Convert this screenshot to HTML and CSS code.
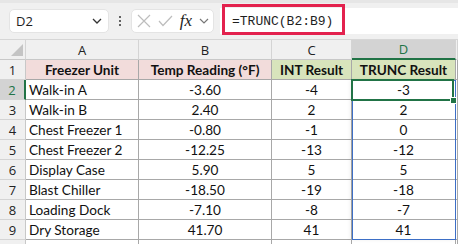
FILE: index.html
```html
<!DOCTYPE html>
<html>
<head>
<meta charset="utf-8">
<link rel="stylesheet" href="styles.css">
</head>
<body>
<div class="app">
  <div class="toolbar">
    <div class="namebox">
      <span class="name">D2</span>
      <svg class="chev" width="10" height="6" viewBox="0 0 10 6"><polyline points="1,1 5,5 9,1" fill="none" stroke="#333" stroke-width="1.3"/></svg>
    </div>
    <div class="dots"><i></i><i></i><i></i></div>
    <div class="fxbox">
      <svg width="14" height="14" viewBox="0 0 14 14"><path d="M1 1 L13 13 M13 1 L1 13" stroke="#bdbdbd" stroke-width="1.2" fill="none"/></svg>
      <svg width="15" height="12" viewBox="0 0 15 12"><polyline points="1,6 5,10.5 14,1" stroke="#bdbdbd" stroke-width="1.2" fill="none"/></svg>
      <span class="fx">fx</span>
      <svg width="10" height="6" viewBox="0 0 10 6"><polyline points="1,1 5,5 9,1" fill="none" stroke="#777" stroke-width="1.2"/></svg>
    </div>
    <div class="formula">
      <span class="ftext">=TRUNC(B2:B9)</span>
      <div class="hl"></div>
    </div>
  </div>
  <div class="sheet">
    <div class="c hd corner"><span class="tri"></span></div>
    <div class="c hd">A</div>
    <div class="c hd">B</div>
    <div class="c hd">C</div>
    <div class="c hd sel">D</div>
    <div class="c hd"></div>

    <div class="c rh">1</div>
    <div class="c th pink">Freezer Unit</div>
    <div class="c th pink">Temp Reading (°F)</div>
    <div class="c th green">INT Result</div>
    <div class="c th green">TRUNC Result</div>
    <div class="c"></div>

    <div class="c rh rsel">2</div>
    <div class="c l">Walk-in A</div>
    <div class="c m">-3.60</div>
    <div class="c m">-4</div>
    <div class="c m">-3</div>
    <div class="c"></div>

    <div class="c rh">3</div>
    <div class="c l">Walk-in B</div>
    <div class="c m">2.40</div>
    <div class="c m">2</div>
    <div class="c m">2</div>
    <div class="c"></div>

    <div class="c rh">4</div>
    <div class="c l">Chest Freezer 1</div>
    <div class="c m">-0.80</div>
    <div class="c m">-1</div>
    <div class="c m">0</div>
    <div class="c"></div>

    <div class="c rh">5</div>
    <div class="c l">Chest Freezer 2</div>
    <div class="c m">-12.25</div>
    <div class="c m">-13</div>
    <div class="c m">-12</div>
    <div class="c"></div>

    <div class="c rh">6</div>
    <div class="c l">Display Case</div>
    <div class="c m">5.90</div>
    <div class="c m">5</div>
    <div class="c m">5</div>
    <div class="c"></div>

    <div class="c rh">7</div>
    <div class="c l">Blast Chiller</div>
    <div class="c m">-18.50</div>
    <div class="c m">-19</div>
    <div class="c m">-18</div>
    <div class="c"></div>

    <div class="c rh">8</div>
    <div class="c l">Loading Dock</div>
    <div class="c m">-7.10</div>
    <div class="c m">-8</div>
    <div class="c m">-7</div>
    <div class="c"></div>

    <div class="c rh">9</div>
    <div class="c l">Dry Storage</div>
    <div class="c m">41.70</div>
    <div class="c m">41</div>
    <div class="c m">41</div>
    <div class="c"></div>

    <div class="c rh"></div>
    <div class="c"></div>
    <div class="c"></div>
    <div class="c"></div>
    <div class="c"></div>
    <div class="c"></div>

    <div class="range"></div>
    <div class="active"><span class="handle"></span></div>
  </div>
</div>
</body>
</html>
```
FILE: styles.css
```css
* { box-sizing: border-box; margin: 0; padding: 0; }
html, body { width: 458px; height: 244px; overflow: hidden; background: #fff; }
body { font-family: "Lato", "Liberation Sans", sans-serif; color: #111; }

.app { width: 458px; height: 244px; overflow: hidden; }

.toolbar {
  height: 40px;
  background: #f0f0f0;
  border-top: 3px solid #e6e6e6;
  border-bottom: 1px solid #d6d6d6;
  display: flex;
  align-items: flex-start;
  padding: 6px 0 0 9px;
  position: relative;
}
.namebox {
  width: 100px; height: 24px;
  background: #fff;
  border-radius: 5px;
  border: 1px solid #e4e4e4;
  display: flex; align-items: center; justify-content: space-between;
  padding: 0 6px 0 6px;
  font-family: "Open Sans", "Noto Sans", sans-serif;
  font-size: 13px; color: #1e1e1e;
}
.dots {
  width: 22px; height: 24px;
  display: flex; flex-direction: column; align-items: center; justify-content: center; gap: 2px;
}
.dots i { display: block; width: 2px; height: 2px; background: #333; border-radius: 1px; }
.fxbox {
  width: 83px; height: 24px;
  background: #fff; border-radius: 5px; border: 1px solid #e4e4e4;
  display: flex; align-items: center;
  padding: 0 4px 0 5px;
  justify-content: space-between;
}
.fx { font-family: "Liberation Serif", serif; font-style: italic; font-size: 17px; color: #222; line-height: 1; margin-bottom: 2px; }
.formula {
  margin-left: 6px;
  flex: 1; height: 26px; margin-top: -1px;
  background: #fff;
  position: relative;
  display: flex; align-items: center;
  padding-left: 12px;
}
.ftext { font-family: "Liberation Mono", "DejaVu Sans Mono", monospace; font-size: 13px; color: #1e1e1e; }
.hl {
  position: absolute; left: 2px; top: -4px; width: 123px; height: 31px;
  border: 3px solid #e3224e;
}

.sheet {
  position: relative;
  display: grid;
  grid-template-columns: 26px 113px 133px 80px 104px 2px;
  grid-auto-rows: 20px;
}
.c {
  border-right: 1px solid #a8a8a8;
  border-bottom: 1px solid #a8a8a8;
  display: flex; align-items: center;
  font-size: 13.6px; white-space: nowrap; overflow: hidden;
  padding-top: 1px;
}
.hd {
  background: #f0f0f0;
  border-right-color: #d4d4d4;
  border-bottom-color: #c8c8c8;
  justify-content: center;
  font-family: "Open Sans", "Noto Sans", sans-serif;
  font-size: 13px; color: #222;
  padding-top: 0;
}
.hd.sel { background: #d3d3d3; border-bottom: 2px solid #217346; color: #217346; }
.corner { position: relative; }
.tri {
  position: absolute; right: 2px; bottom: 3px;
  width: 0; height: 0;
  border-left: 12px solid transparent;
  border-bottom: 12px solid #c4c4c4;
}
.rh {
  background: #f0f0f0;
  border-right-color: #c8c8c8;
  border-bottom-color: #d4d4d4;
  justify-content: center;
  font-family: "Open Sans", "Noto Sans", sans-serif;
  font-size: 13px; color: #222;
  padding-top: 0;
}
.rh.rsel { background: #d3d3d3; border-right: 2px solid #217346; color: #217346; }
.th { font-weight: 700; justify-content: center; color: #111; }
.pink { background: #f2dcdb; }
.green { background: #d8e4bc; }
.l { padding-left: 3px; }
.m { justify-content: center; }

.range {
  position: absolute; left: 352px; top: 40px; width: 104px; height: 160px;
  border: 1px solid #3d6fc6;
  box-shadow: -2px 0 4px rgba(0,0,0,0.06);
  pointer-events: none;
}
.active {
  position: absolute; left: 351px; top: 39px; width: 103px; height: 22px;
  border: 2px solid #217346;
}
.handle {
  position: absolute; right: -5px; bottom: -5px; width: 7px; height: 7px;
  background: #217346; border: 1px solid #fff;
}
```
